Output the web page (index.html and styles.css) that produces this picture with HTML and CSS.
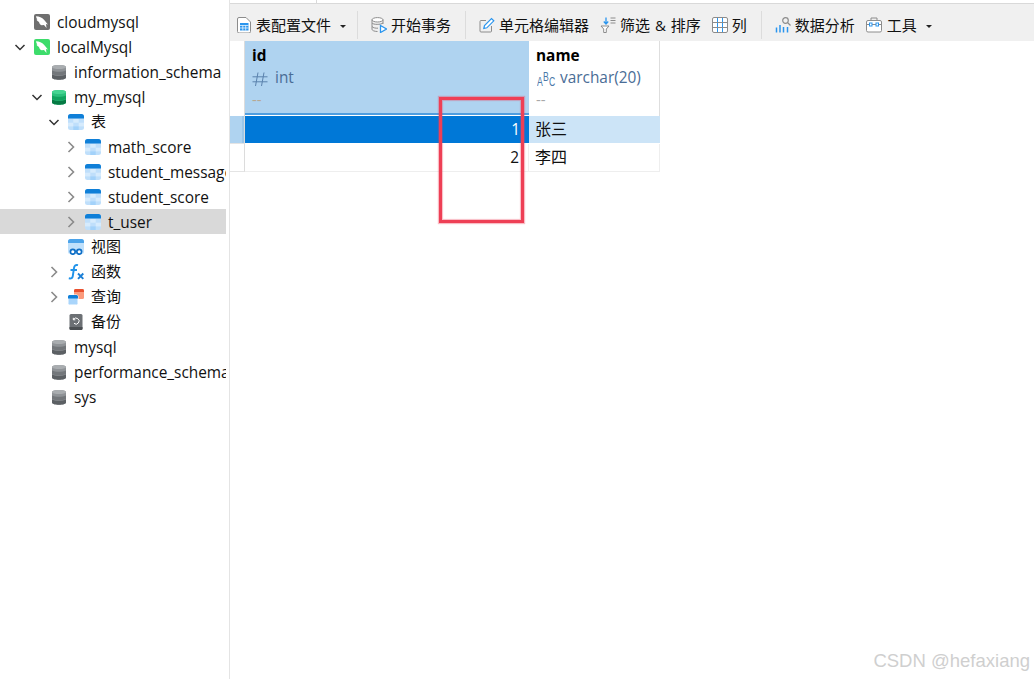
FILE: index.html
```html
<!DOCTYPE html>
<html lang="zh">
<head>
<meta charset="utf-8">
<title>Navicat</title>
<link rel="stylesheet" href="styles.css">
</head>
<body>
<svg class="defs" width="0" height="0">
  <defs>
    <symbol id="chev-r" viewBox="0 0 16 16"><path d="M5.500 3l5 5-5 5" fill="none" stroke="#8a8a8a" stroke-width="1.600"/></symbol>
    <symbol id="chev-d" viewBox="0 0 16 16"><path d="M3.500 6L8 10.500 12.500 6" fill="none" stroke="#333" stroke-width="1.500"/></symbol>
    <symbol id="db-grey" viewBox="0 0 16 16"><path d="M1 3C1 .2 15 .2 15 3V13.500c0 3-14 3-14 0z" fill="#8f9397"/><path d="M1 3C1 .2 15 .2 15 3S1 5.800 1 3z" fill="#a9adb0"/><path d="M1 6.500c3 1.800 11 1.800 14 0v3.500c-3 1.800-11 1.800-14 0z" fill="#73777b"/><path d="M1 10.500c3 1.800 11 1.800 14 0v3c0 3-14 3-14 0z" fill="#5c6064"/></symbol>
    <symbol id="db-green" viewBox="0 0 16 16"><path d="M1 3C1 .2 15 .2 15 3V13.500c0 3-14 3-14 0z" fill="#2cc07c"/><path d="M1 3C1 .2 15 .2 15 3S1 5.800 1 3z" fill="#45d592"/><path d="M1 6.500c3 1.800 11 1.800 14 0v3.500c-3 1.800-11 1.800-14 0z" fill="#11a35f"/><path d="M1 10.500c3 1.800 11 1.800 14 0v3c0 3-14 3-14 0z" fill="#067a44"/></symbol>
    <symbol id="tbl" viewBox="0 0 16 16"><rect width="16" height="16" rx="2.500" fill="#bfdffb"/><rect x="5.300" y="5" width="5.400" height="3.700" fill="#d6ebfd"/><rect y="8.700" width="5.300" height="3.700" fill="#d6ebfd"/><rect x="10.700" y="8.700" width="5.300" height="3.700" fill="#d6ebfd"/><rect x="5.300" y="12.400" width="5.400" height="3.600" fill="#a3d2fa"/><path d="M0 4.500V2.500A2.500 2.500 0 0 1 2.500 0h11A2.500 2.500 0 0 1 16 2.500V4.500z" fill="#0f7fd8"/></symbol>
    <symbol id="dolphin" viewBox="0 0 16 16"><path d="M2 2.200c3.300.2 6 1.400 8 3.500 1.500 1.500 2.300 3.200 4 4.700l-2-.3.500 3.900-2.500-2.900-2.400.2c-1.500-.4-2.300-1.800-2.600-3.300-1-.5-2-1.300-2.600-2.300l.9-.1C2.600 4.700 2.100 3.500 2 2.200z" fill="#fff"/></symbol>
  </defs>
</svg>
<div class="app">
  <aside class="tree">
    <div class="row"><span class="chev"></span><span class="ic logo logo-grey"><svg width="16" height="16"><use href="#dolphin"/></svg></span><span class="lb en">cloudmysql</span></div>
    <div class="row"><span class="chev"><svg width="16" height="16"><use href="#chev-d"/></svg></span><span class="ic logo logo-green"><svg width="16" height="16"><use href="#dolphin"/></svg></span><span class="lb en">localMysql</span></div>
    <div class="row l1"><span class="chev"></span><svg class="ic" width="16" height="16"><use href="#db-grey"/></svg><span class="lb en">information_schema</span></div>
    <div class="row l1"><span class="chev"><svg width="16" height="16"><use href="#chev-d"/></svg></span><svg class="ic" width="16" height="16"><use href="#db-green"/></svg><span class="lb en">my_mysql</span></div>
    <div class="row l2"><span class="chev"><svg width="16" height="16"><use href="#chev-d"/></svg></span><svg class="ic" width="16" height="16"><use href="#tbl"/></svg><span class="lb">表</span></div>
    <div class="row l3"><span class="chev"><svg width="16" height="16"><use href="#chev-r"/></svg></span><svg class="ic" width="16" height="16"><use href="#tbl"/></svg><span class="lb en">math_score</span></div>
    <div class="row l3"><span class="chev"><svg width="16" height="16"><use href="#chev-r"/></svg></span><svg class="ic" width="16" height="16"><use href="#tbl"/></svg><span class="lb en">student_message</span></div>
    <div class="row l3"><span class="chev"><svg width="16" height="16"><use href="#chev-r"/></svg></span><svg class="ic" width="16" height="16"><use href="#tbl"/></svg><span class="lb en">student_score</span></div>
    <div class="row l3 sel"><span class="chev"><svg width="16" height="16"><use href="#chev-r"/></svg></span><svg class="ic" width="16" height="16"><use href="#tbl"/></svg><span class="lb en">t_user</span></div>
    <div class="row l2"><span class="chev"></span>
      <svg class="ic" width="16" height="16" viewBox="0 0 16 16"><rect width="16" height="15" rx="2.500" fill="#bfe0fb"/><path d="M0 4V2.500A2.500 2.500 0 0 1 2.500 0h11A2.500 2.500 0 0 1 16 2.500V4z" fill="#4ba3ea"/><circle cx="4.800" cy="12.800" r="2.400" fill="#fff" stroke="#0f6fc6" stroke-width="1.700"/><circle cx="11.200" cy="12.800" r="2.400" fill="#fff" stroke="#0f6fc6" stroke-width="1.700"/></svg>
      <span class="lb">视图</span></div>
    <div class="row l2"><span class="chev"><svg width="16" height="16"><use href="#chev-r"/></svg></span>
      <svg class="ic" width="16" height="16" viewBox="0 0 16 16"><path d="M10 1.200C7.500.5 6.300 1.800 6 4L4.800 12c-.3 2-1.500 2.800-4 2.300M2.500 6h6.500" fill="none" stroke="#2093ea" stroke-width="1.900"/><path d="M10 9.500l5.300 5.300M15.300 9.500L10 14.800" stroke="#1b7fd6" stroke-width="1.900"/></svg>
      <span class="lb">函数</span></div>
    <div class="row l2"><span class="chev"><svg width="16" height="16"><use href="#chev-r"/></svg></span>
      <svg class="ic" width="16" height="16" viewBox="0 0 16 16"><rect x="6" y="0" width="10" height="10" rx="1.500" fill="#fb9a7c"/><path d="M6 3V1.500A1.500 1.500 0 0 1 7.500 0h7A1.500 1.500 0 0 1 16 1.500V3z" fill="#e9502f"/><rect x="0" y="6" width="10" height="10" rx="1.500" fill="#a9d5fb" stroke="#fff"/><path d="M0 9.500V7.500A1.500 1.500 0 0 1 1.500 6h7A1.500 1.500 0 0 1 10 7.500v2z" fill="#0f7fd8"/></svg>
      <span class="lb">查询</span></div>
    <div class="row l2"><span class="chev"></span>
      <svg class="ic" width="16" height="16" viewBox="0 0 16 16"><rect x="1.500" y="0" width="13" height="16" rx="1.500" fill="#6c7074"/><path d="M1.500 13h13v1.500a1.500 1.500 0 0 1-1.500 1.500H3a1.500 1.500 0 0 1-1.500-1.500z" fill="#4b4f52"/><path d="M5.500 5.500A3 3 0 1 1 6 9.300M5.300 3.800v2h2" fill="none" stroke="#fff" stroke-width="1"/></svg>
      <span class="lb">备份</span></div>
    <div class="row l1"><span class="chev"></span><svg class="ic" width="16" height="16"><use href="#db-grey"/></svg><span class="lb en">mysql</span></div>
    <div class="row l1"><span class="chev"></span><svg class="ic" width="16" height="16"><use href="#db-grey"/></svg><span class="lb en">performance_schema</span></div>
    <div class="row l1"><span class="chev"></span><svg class="ic" width="16" height="16"><use href="#db-grey"/></svg><span class="lb en">sys</span></div>
  </aside>
  <main class="main">
    <div class="tabs"><span class="tab"></span></div>
    <div class="toolbar">
      <div class="tool">
        <svg width="16" height="16" viewBox="0 0 16 16"><path d="M1.500 2a1.500 1.500 0 0 1 1.500-1.500h7l4.500 4.500v9.500a1.500 1.500 0 0 1-1.500 1.500h-10a1.500 1.500 0 0 1-1.500-1.500z" fill="#fff" stroke="#8c8c8c"/><rect x="4" y="6" width="8.500" height="7.500" fill="#2a95ee"/><path d="M4 8.500h8.500M4 11h8.500M6.800 8.500v5M9.700 8.500v5" stroke="#fff" stroke-width=".7"/></svg>
        <span>表配置文件</span><span class="caret first"></span>
      </div>
      <div class="sep"></div>
      <div class="tool">
        <svg width="16" height="16" viewBox="0 0 16 16"><ellipse cx="6.500" cy="2.800" rx="5.500" ry="2.200" fill="#fff" stroke="#8c8c8c"/><path d="M1 2.800v9.500c0 1.200 2.500 2.200 5.500 2.200M12 2.800V7M1 6c1 1.800 9 1.800 11 0M1 9.500c1 1.500 4 1.800 6 1.700" fill="none" stroke="#8c8c8c"/><path d="M9.500 8.500l6 3.500-6 3.500z" fill="#fff" stroke="#2a95ee" stroke-width="1.300"/></svg>
        <span>开始事务</span>
      </div>
      <div class="sep"></div>
      <div class="tool">
        <svg width="16" height="16" viewBox="0 0 16 16"><path d="M7 3.500H2a1 1 0 0 0-1 1V14a1 1 0 0 0 1 1h9.500a1 1 0 0 0 1-1V9" fill="none" stroke="#8c8c8c"/><path d="M4.800 11.500l.7-3L12.500 1.500l2.300 2.300-7 7z" fill="#fff" stroke="#2a95ee" stroke-width="1.200"/></svg>
        <span>单元格编辑器</span>
      </div>
      <div class="tool">
        <svg width="16" height="16" viewBox="0 0 16 16"><path d="M1 9h8L6.300 12v3.500H3.700V12z" fill="#fff" stroke="#8c8c8c"/><path d="M6 .5v6M3.800 4.500L6 7l2.200-2.500" fill="none" stroke="#2a95ee" stroke-width="1.300"/><path d="M10.500 1h5M10.500 3.500h5M10.500 6h5" stroke="#8c8c8c"/></svg>
        <span class="sort">筛选 &amp; 排序</span>
      </div>
      <div class="tool">
        <svg width="16" height="16" viewBox="0 0 16 16"><rect x=".5" y=".5" width="15" height="15" rx="1.500" fill="#fff" stroke="#8c8c8c"/><path d="M5.500 1v14M10.500 1v14" stroke="#2a95ee"/><path d="M1 5.500h14M1 10.500h14" stroke="#8c8c8c"/></svg>
        <span>列</span>
      </div>
      <div class="sep"></div>
      <div class="tool">
        <svg width="16" height="16" viewBox="0 0 16 16"><path d="M1.500 10.500v5M5 8v7.500M8.500 10v5.500M12.500 10v5.500" fill="none" stroke="#2a95ee" stroke-width="1.500"/><circle cx="10.500" cy="3.500" r="2.800" fill="none" stroke="#8c8c8c" stroke-width="1.200"/><path d="M12.500 5.500l3 3" stroke="#8c8c8c" stroke-width="1.200"/></svg>
        <span>数据分析</span>
      </div>
      <div class="tool">
        <svg width="16" height="16" viewBox="0 0 16 16"><rect x=".5" y="3.500" width="15" height="11.500" rx="1.500" fill="#fff" stroke="#8c8c8c"/><path d="M5 3.500V1h6v2.500M1 7.500h14" fill="none" stroke="#8c8c8c"/><rect x="3.500" y="6" width="2.500" height="3" fill="#fff" stroke="#2a95ee"/><rect x="10" y="6" width="2.500" height="3" fill="#fff" stroke="#2a95ee"/></svg>
        <span class="tool-last">工具</span><span class="caret"></span>
      </div>
    </div>
    <div class="grid">
      <div class="corner"></div>
      <div class="head head-sel">
        <b class="fname">id</b>
        <div class="ftype"><svg class="hash" width="16" height="16" viewBox="0 0 16 16"><path d="M6 1.500L3.500 15M12 1.500L9.500 15M.5 5.800h15M.5 10.800h15" stroke="#5b82ad" stroke-width="1"/></svg><span>int</span></div>
        <div class="fnull">--</div>
      </div>
      <div class="head">
        <b class="fname">name</b>
        <div class="ftype"><span class="abc"><i>A</i><i class="up">B</i><i>C</i></span><span>varchar(20)</span></div>
        <div class="fnull">--</div>
      </div>
      <div class="gut gut-sel"></div>
      <div class="cell num cell-on">1</div>
      <div class="cell cell-tint">张三</div>
      <div class="gut"></div>
      <div class="cell num">2</div>
      <div class="cell">李四</div>
    </div>
  </main>
</div>
<div class="mark"></div>
<div class="water">CSDN @hefaxiang</div>
</body>
</html>
```
FILE: styles.css
```css
* { box-sizing: border-box; }
html, body { margin: 0; height: 100%; background: #fff; overflow: hidden; }
body { font: 15px/1 "Open Sans", "Noto Sans CJK SC", sans-serif; color: #111; position: relative; }
.defs { position: absolute; }
.app { display: flex; height: 100%; }

.tree { flex: 0 0 230px; width: 230px; padding: 9px 3px 0 0; border-right: 1px solid #e4e4e4; overflow: hidden; }
.row { display: flex; align-items: center; height: 25px; padding-left: 12px; white-space: nowrap; overflow: hidden; }
.l1 { padding-left: 29px; }
.l2 { padding-left: 46px; }
.l3 { padding-left: 63px; }
.sel { background: #d9d9d9; }
.chev { flex: 0 0 16px; width: 16px; height: 16px; margin-right: 6px; }
.chev svg, .ic { display: block; }
.ic { flex: 0 0 16px; width: 16px; height: 16px; margin-right: 7px; }
.logo { border-radius: 2px; }
.logo-grey { background: #6f6f6f; }
.logo-green { background: #3ddc6b; }
.logo svg { display: block; }
.lb { line-height: 25px; }
.en { font-size: 15.4px; line-height: 23px; margin-top: 2px; }

.main { flex: 1; display: flex; flex-direction: column; min-width: 0; }
.tabs { height: 4px; border-bottom: 1px solid #d9d9d9; display: flex; }
.tab { width: 87px; height: 3px; border-right: 1px solid #d9d9d9; }
.toolbar { display: flex; align-items: center; gap: 11px; height: 37px; padding: 5px 0 0 6px; background: #f0f0f0; }
.tool { display: flex; align-items: center; gap: 4px; height: 28px; }
.tool svg { display: block; flex: none; }
.tool span { white-space: nowrap; }
.tool-last { margin-left: 1px; }
.sort { word-spacing: 1px; }
.caret { width: 0; height: 0; margin: 2px 0 0 5px; border: 3px solid transparent; border-top: 3px solid #222; border-bottom: 0; }
.caret.first { margin-right: -3px; }
.sep { width: 1px; height: 28px; margin: 0 2px 0 3px; background: #dcdcdc; }

.grid { display: grid; grid-template-columns: 15px 284px 131px; grid-template-rows: 75px 28px 28px; width: 430px; }
.corner { border-right: 1px solid #dcdcdc; }
.head { padding: 6px 0 0 7px; border-right: 1px solid #dedede; }
.head-sel { background: #afd3f0; border-bottom: 2px solid #4f9ee0; border-right: 0; height: 74px; }
.fname { display: block; height: 17px; font-size: 15.4px; font-weight: 700; line-height: 17px; color: #000; }
.ftype { display: flex; align-items: center; gap: 7px; height: 17px; margin-top: 5px; font-size: 15.4px; color: #4a6d96; }
.hash { display: block; flex: none; margin-top: 2px; }
.fnull { height: 14px; margin-top: 6px; line-height: 14px; color: #a8a8a8; }
.head-sel .fnull { color: #b7a892; }
.abc { display: flex; flex: none; justify-content: space-between; width: 17px; height: 15px; margin: 3px -1px 0 1px; font: 12px/10px "Liberation Sans", sans-serif; color: #4a78a8; }
.abc i { display: block; width: 6px; font-style: normal; text-align: center; align-self: flex-end; transform: scaleX(.72); transform-origin: left center; }
.abc .up { align-self: flex-start; }

.gut { border-right: 1px solid #dcdcdc; border-bottom: 1px solid #e4e4e4; }
.gut-sel { background: #afd3f0; box-shadow: inset -2px 0 0 #9cc6e8; }
.cell { padding-left: 6px; border-right: 1px solid #eee; border-bottom: 1px solid #eee; font-size: 16px; line-height: 26px; color: #111; }
.num { padding: 0 9px 0 0; text-align: right; font-size: 15.4px; line-height: 28px; }
.cell-on { background: #0078d7; color: #fff; border-right: 0; border-bottom-color: #fff; }
.cell-tint { background: #cce4f7; border-bottom-color: #fff; border-right: 0; }

.mark { position: absolute; left: 439px; top: 97px; width: 85px; height: 126px; border: 3px solid #ee3f55; box-shadow: 0 0 1px 1px rgba(238, 63, 85, .35), inset 0 0 1px 1px rgba(238, 63, 85, .35); }
.water { position: absolute; right: 4px; top: 652px; font: 18.5px/18px "Liberation Sans", sans-serif; color: #cfcfcf; white-space: nowrap; }
```
